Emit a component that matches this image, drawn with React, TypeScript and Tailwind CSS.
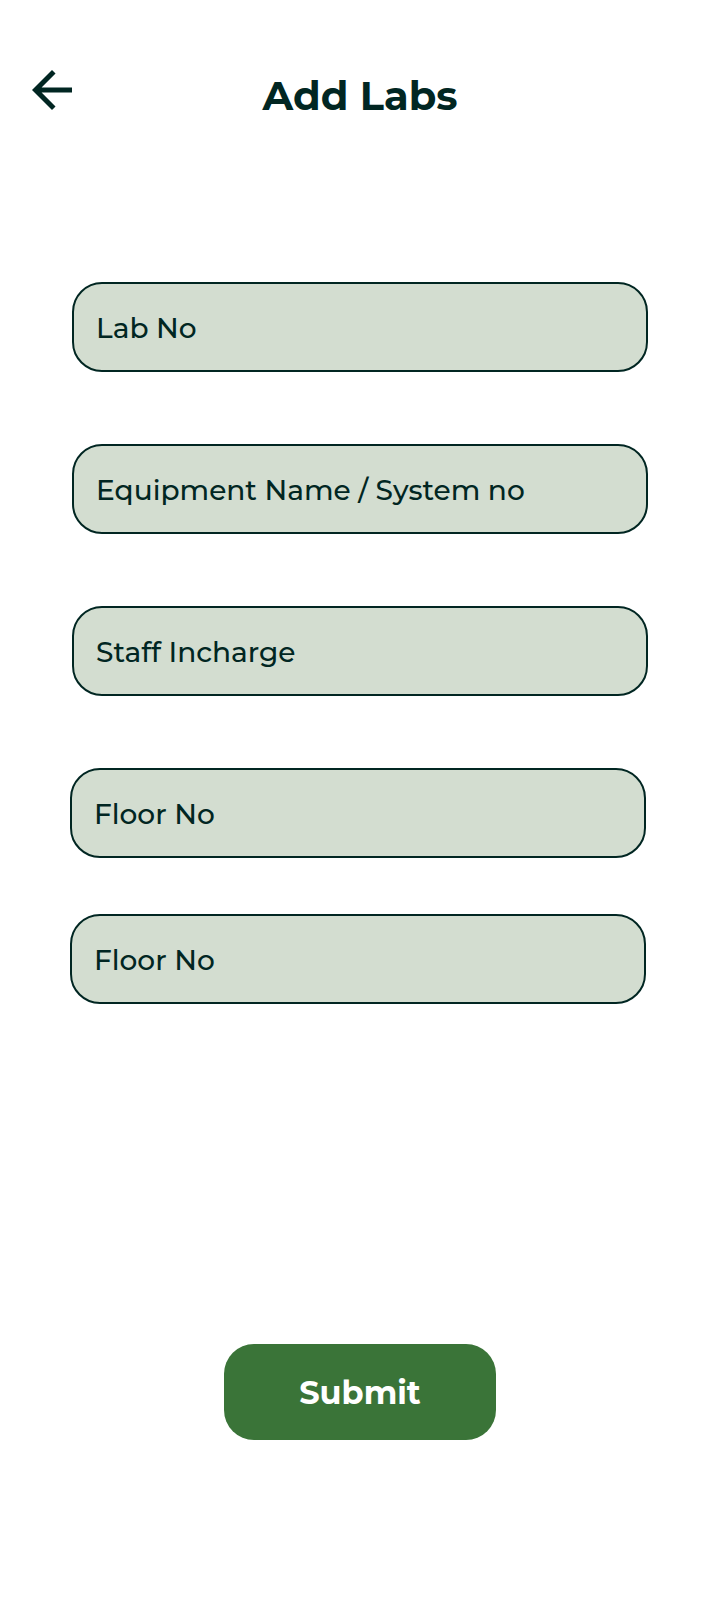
import React from "react";

type FieldProps = { id: string; label: string };

function Field({ id, label }: FieldProps) {
  return (
    <input
      id={id}
      name={id}
      type="text"
      aria-label={label}
      placeholder={label}
      className="block h-[90px] w-full rounded-[30px] border-2 border-[#012622] bg-[#d3ddd0] px-[22px] pt-0.5 text-[28px] font-medium text-[#012622] placeholder:text-[#012622] placeholder:opacity-100"
    />
  );
}

export default function App() {
  return (
    <main className="min-h-screen bg-white pb-40 font-['Montserrat','Inter',sans-serif] text-[#012622]">
      <header className="grid grid-cols-[60px_1fr_60px] items-start px-[22px] pt-[60px]">
        <button type="button" aria-label="Back" className="size-[60px]">
          <svg viewBox="0 0 24 24" className="size-full" fill="currentColor" aria-hidden="true">
            <path d="M20 11H7.83l5.59-5.59L12 4l-8 8 8 8 1.41-1.41L7.83 13H20v-2z" />
          </svg>
        </button>
        <h1 className="pt-3 text-center text-[40px] leading-[48px] font-bold">Add Labs</h1>
      </header>

      <form className="pt-[162px]" onSubmit={(event) => event.preventDefault()}>
        <div className="flex flex-col gap-[72px] px-[72px]">
          <Field id="lab-no" label="Lab No" />
          <Field id="equipment" label="Equipment Name / System no" />
          <Field id="staff" label="Staff Incharge" />
        </div>
        <div className="flex flex-col gap-14 pt-[72px] pr-[74px] pl-[70px]">
          <Field id="floor-no" label="Floor No" />
          <Field id="floor-no-2" label="Floor No" />
        </div>
        <div className="flex justify-center pt-[340px]">
          <button
            type="submit"
            className="h-24 w-[272px] rounded-[30px] bg-[#3a7438] pt-0.5 text-[32px] font-bold text-white"
          >
            Submit
          </button>
        </div>
      </form>
    </main>
  );
}
